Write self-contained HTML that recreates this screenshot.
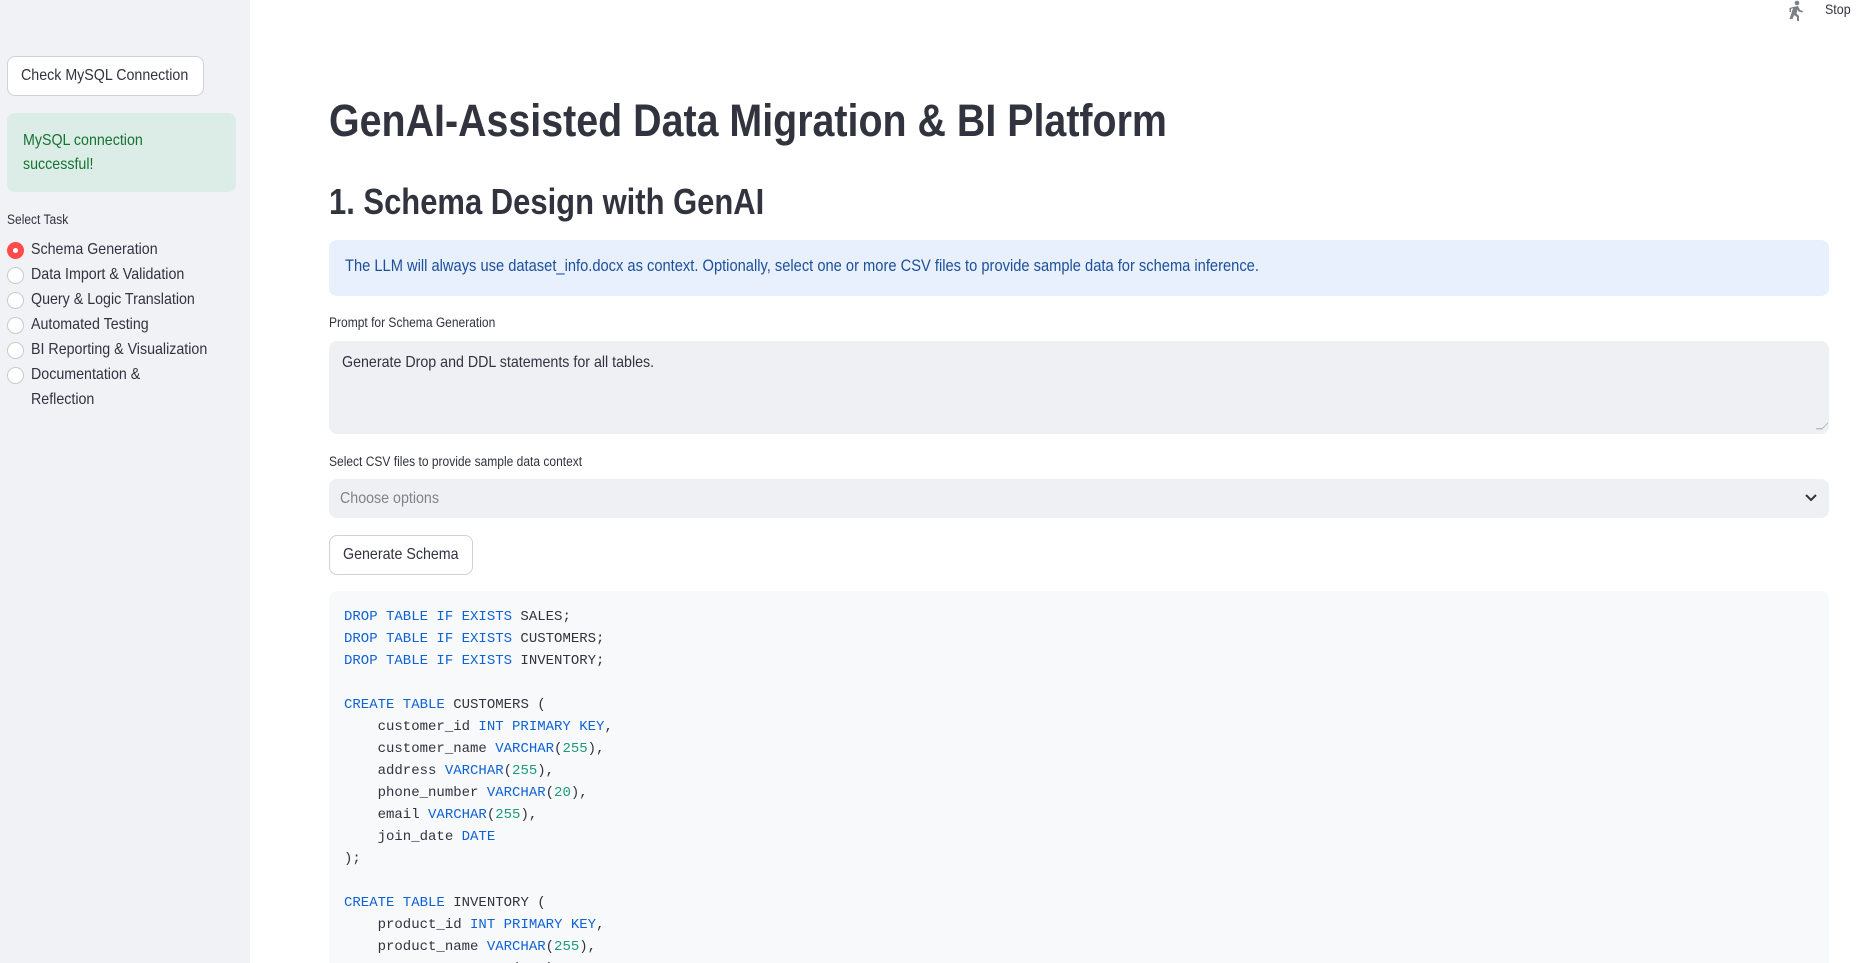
<!DOCTYPE html>
<html style="overflow:hidden;height:963px"><head><meta charset="utf-8"><style>
*{box-sizing:border-box;margin:0;padding:0}
body{width:1875px;height:963px;overflow:hidden;background:#fff;font-family:"Liberation Sans",sans-serif;color:#31333f;position:relative}
.n{display:inline-block;transform:scaleX(.89);transform-origin:left center;white-space:nowrap}
.abs{position:absolute}
#side{position:absolute;left:0;top:0;width:250px;height:963px;background:#f0f2f6}
.btn{position:absolute;border:1px solid #d0d2d8;border-radius:8px;background:#fff;font-size:16px;display:flex;align-items:center;padding-left:13px}
.radio{position:absolute;left:7px;width:17px;height:17px;border-radius:50%;border:1px solid #c8cad0;background:#fff}
.rl{position:absolute;left:31px;font-size:16px;line-height:20px}
pre{font-family:"Liberation Mono",monospace;font-size:14px;line-height:22px;color:#31333f}
.k{color:#0f62d6}.d{color:#1a9a7a}
</style></head><body>
<div id="side">
 <div class="btn" style="left:7px;top:56px;width:197px;height:40px"><span class="n">Check MySQL Connection</span></div>
 <div class="abs" style="left:7px;top:113px;width:229px;height:79px;background:#dbede6;border-radius:8px"></div>
 <div class="abs" style="left:23px;top:129px;font-size:16px;line-height:24px;color:#177233"><span class="n">MySQL connection</span><br><span class="n">successful!</span></div>
 <div class="abs" style="left:7px;top:212px;font-size:13.5px"><span class="n">Select Task</span></div>
 <div class="radio" style="top:242px;background:#ff4b4b;border:5px solid #ff4b4b"><div style="width:5px;height:5px;background:#fff;border-radius:50%;margin:1px 0 0 1px"></div></div>
 <div class="rl" style="top:240px"><span class="n">Schema Generation</span></div>
 <div class="radio" style="top:267px"></div><div class="rl" style="top:265px"><span class="n">Data Import &amp; Validation</span></div>
 <div class="radio" style="top:292px"></div><div class="rl" style="top:290px"><span class="n">Query &amp; Logic Translation</span></div>
 <div class="radio" style="top:317px"></div><div class="rl" style="top:315px"><span class="n">Automated Testing</span></div>
 <div class="radio" style="top:342px"></div><div class="rl" style="top:340px"><span class="n">BI Reporting &amp; Visualization</span></div>
 <div class="radio" style="top:367px"></div><div class="rl" style="top:365px"><span class="n">Documentation &amp;</span></div>
 <div class="rl" style="top:390px"><span class="n">Reflection</span></div>
</div>
<svg class="abs" style="left:1786px;top:0" width="20" height="22" viewBox="0 0 20 22"><g fill="#7d7f86"><circle cx="11" cy="3" r="2.3"/><path d="M7 7l5-1 2 4 3 1-0.5 1.5-4-1-1-2-1 4 2.5 2.5v5h-2v-4l-3-2-1.5 4H3.5l2-6 1.5-5-2 1v3H3.5V8z"/></g></svg>
<div class="abs" style="left:1825px;top:1px;font-size:14px"><span class="n">Stop</span></div>

<div class="abs" style="left:329px;top:95px;font-size:45px;font-weight:bold;line-height:52px"><span class="n" style="transform:scaleX(.875)">GenAI-Assisted Data Migration &amp; BI Platform</span></div>
<div class="abs" style="left:329px;top:181px;font-size:36px;font-weight:bold;line-height:42px"><span class="n" style="transform:scaleX(.86)">1. Schema Design with GenAI</span></div>
<div class="abs" style="left:329px;top:240px;width:1500px;height:56px;background:#e8f0fd;border-radius:8px"></div>
<div class="abs" style="left:345px;top:257px;font-size:16.5px;color:#1c4f9b"><span class="n" style="transform:scaleX(.89)">The LLM will always use dataset_info.docx as context. Optionally, select one or more CSV files to provide sample data for schema inference.</span></div>
<div class="abs" style="left:329px;top:315px;font-size:13.5px"><span class="n">Prompt for Schema Generation</span></div>
<div class="abs" style="left:329px;top:341px;width:1500px;height:93px;background:#eef0f4;border-radius:8px"></div>
<div class="abs" style="left:342px;top:354px;font-size:16px"><span class="n">Generate Drop and DDL statements for all tables.</span></div>
<div class="abs" style="left:1818px;top:422px;width:8px;height:8px;border-bottom:1px solid #999;border-right:1px solid #999;transform:skewX(-45deg) scale(.8)"></div>
<div class="abs" style="left:329px;top:454px;font-size:13.5px"><span class="n">Select CSV files to provide sample data context</span></div>
<div class="abs" style="left:329px;top:479px;width:1500px;height:39px;background:#eef0f4;border-radius:8px"></div>
<div class="abs" style="left:340px;top:490px;font-size:16px;color:#808289"><span class="n">Choose options</span></div>
<svg class="abs" style="left:1804px;top:493px" width="14" height="10"><path d="M2 2l5 5 5-5" stroke="#31333f" stroke-width="2" fill="none"/></svg>
<div class="btn" style="left:329px;top:535px;width:144px;height:40px"><span class="n">Generate Schema</span></div>
<div class="abs" style="left:329px;top:591px;width:1500px;height:372px;background:#f8f9fb;border-radius:8px 8px 0 0;overflow:hidden">
<pre class="abs" style="left:15px;top:15px"><span class="k">DROP TABLE IF EXISTS</span> SALES;
<span class="k">DROP TABLE IF EXISTS</span> CUSTOMERS;
<span class="k">DROP TABLE IF EXISTS</span> INVENTORY;

<span class="k">CREATE TABLE</span> CUSTOMERS (
    customer_id <span class="k">INT PRIMARY KEY</span>,
    customer_name <span class="k">VARCHAR</span>(<span class="d">255</span>),
    address <span class="k">VARCHAR</span>(<span class="d">255</span>),
    phone_number <span class="k">VARCHAR</span>(<span class="d">20</span>),
    email <span class="k">VARCHAR</span>(<span class="d">255</span>),
    join_date <span class="k">DATE</span>
);

<span class="k">CREATE TABLE</span> INVENTORY (
    product_id <span class="k">INT PRIMARY KEY</span>,
    product_name <span class="k">VARCHAR</span>(<span class="d">255</span>),
    category <span class="k">VARCHAR</span>(<span class="d">255</span>),</pre>
</div>
</body></html>
